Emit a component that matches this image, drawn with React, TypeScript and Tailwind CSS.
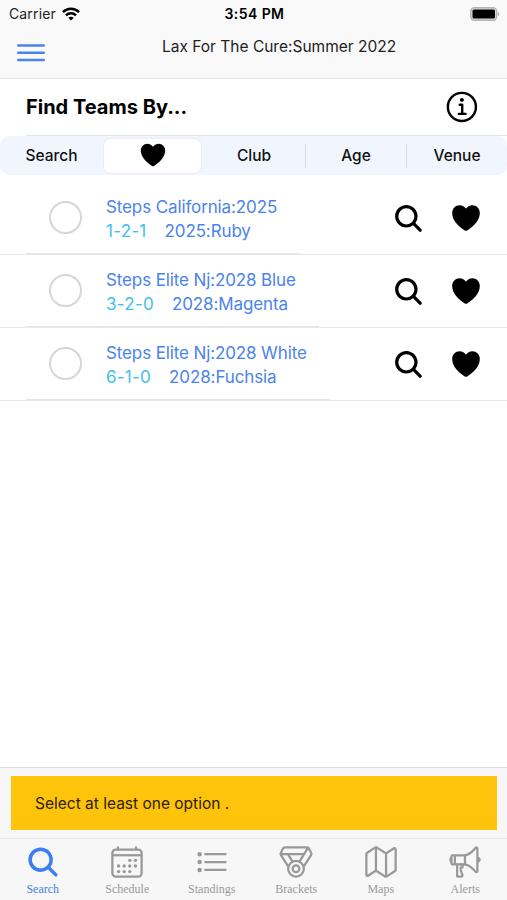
import { useState } from 'react';
import {
  IoCalendarOutline,
  IoHeart,
  IoInformationCircleOutline,
  IoListOutline,
  IoMapOutline,
  IoMedalOutline,
  IoMegaphoneOutline,
  IoSearch,
} from 'react-icons/io5';

const teams = [
  { name: 'Steps California:2025', record: '1-2-1', division: '2025:Ruby', line: 'w-[274px]' },
  { name: 'Steps Elite Nj:2028 Blue', record: '3-2-0', division: '2028:Magenta', line: 'w-[293px]' },
  { name: 'Steps Elite Nj:2028 White', record: '6-1-0', division: '2028:Fuchsia', line: 'w-[304px]' },
];

const tabs = [
  { label: 'Search', Icon: IoSearch },
  { label: 'Schedule', Icon: IoCalendarOutline },
  { label: 'Standings', Icon: IoListOutline },
  { label: 'Brackets', Icon: IoMedalOutline },
  { label: 'Maps', Icon: IoMapOutline },
  { label: 'Alerts', Icon: IoMegaphoneOutline },
];

const StatusBar = () => (
  <div className="grid h-7 grid-cols-3 items-center pl-[9px] pr-[7px] text-[14px] leading-none">
    <div className="flex items-center gap-[6px] text-[#222]">
      <span className="tracking-[0.01em]">Carrier</span>
      <svg className="mb-px h-[14px] w-[18px]" viewBox="0 0 18 14" fill="none" stroke="#000" strokeWidth="2.5">
        <path d="M1 5.1C5.5.6 12.5.6 17 5.1" />
        <path d="M4 8.3c2.8-2.8 7.2-2.8 10 0" />
        <path d="M9 13.5 6.3 10.8c1.5-1.5 3.9-1.5 5.4 0z" fill="#000" stroke="none" />
      </svg>
    </div>
    <span className="text-center text-[14px] font-semibold tracking-[0.03em]">3:54 PM</span>
    <svg className="mb-px ml-auto h-[14px] w-[30px]" viewBox="0 0 30 14">
      <rect x=".8" y=".8" width="25.8" height="12.4" rx="3.5" fill="#ddd" stroke="#b4b4b4" strokeWidth="1.4" />
      <rect x="2.5" y="2.5" width="22.5" height="9" rx="1.5" />
      <path d="M27.8 4.8c2 .8 2 3.6 0 4.4z" fill="#aaa" />
    </svg>
  </div>
);

const App = () => {
  const [tab, setTab] = useState('Search');

  return (
    <div className="flex h-[900px] w-[507px] flex-col overflow-hidden bg-white font-['Inter','Liberation_Sans',sans-serif] text-black">
      <header className="h-[79px] shrink-0 border-b border-[#e6e6e6] bg-[#f9f9f9]">
        <StatusBar />
        <div className="flex pl-[17px]">
          <button className="mt-4 h-[18px] w-7">
            <svg className="h-[18px] w-7" viewBox="0 0 28 18" stroke="#4b83ec" strokeWidth="2.4" strokeLinecap="round">
              <path d="M1.200 1.500h25.600M1.200 8.800h25.600M1.200 16h25.600" />
            </svg>
          </button>
          <h1 className="ml-[117px] mt-[9px] text-[15.5px] leading-5 text-[#222]">Lax For The Cure:Summer 2022</h1>
        </div>
      </header>

      <div className="flex h-14 shrink-0 items-center justify-between pl-[26px] pr-[25px]">
        <h2 className="text-[20px] font-bold">Find Teams By...</h2>
        <IoInformationCircleOutline className="size-[39px]" />
      </div>

      <div className="ml-[26px] h-px shrink-0 bg-[#e4e4e6]"></div>
      <div className="flex h-[39px] shrink-0 items-center rounded-[10px] bg-[#f1f6fe] text-[15.5px] font-medium text-[#111]">
        <span className="w-[103px] text-center">Search</span>
        <span className="flex h-9 w-[99px] items-center justify-center rounded-lg border border-[#eaedf3] bg-white text-black">
          <IoHeart className="mb-px size-[30px]" />
        </span>
        <span className="w-[103px] pl-px text-center">Club</span>
        <span className="h-6 w-px bg-[#d9dde5]"></span>
        <span className="w-[100px] text-center">Age</span>
        <span className="h-6 w-px bg-[#d9dde5]"></span>
        <span className="w-[100px] text-center">Venue</span>
      </div>

      <main className="flex-1 pt-[7px]">
        {teams.map((team) => (
          <div key={team.name} className="flex h-[73px] flex-col justify-between border-b border-[#e8e8e8]">
            <div className="flex pl-[49px] pt-[13px]">
              <span className="mt-[6px] size-[33px] rounded-full border-2 border-[#d6d6d6]"></span>
              <div className="ml-6 w-[285px] whitespace-nowrap text-[17px] leading-6 tracking-[-0.007em] text-[#4b83ec]">
                <p>{team.name}</p>
                <p className="flex gap-[18px]">
                  <span className="tracking-[0.015em] text-[#45bdf0]">{team.record}</span>
                  <span>{team.division}</span>
                </p>
              </div>
              <IoSearch className="ml-px mt-[7px] size-[33px]" />
              <IoHeart className="ml-6 mt-[6px] size-[34px]" />
            </div>
            <div className={`ml-[26px] h-px bg-[#e4e4e4] ${team.line}`}></div>
          </div>
        ))}
      </main>

      <div className="h-[71px] shrink-0 border-t border-[#dedede] bg-[#f7f7f7] px-[10.5px] pt-2">
        <div className="flex h-[54px] items-center bg-[#fec40b] pl-[24.5px] pt-px text-[15.5px] text-[#2c2100]">
          Select at least one option .
        </div>
      </div>

      <nav className="grid h-[62px] shrink-0 grid-cols-6 border-t border-[#e9e9e9] bg-[#f7f7f7]">
        {tabs.map(({ label, Icon }) => (
          <button
            key={label}
            onClick={() => setTab(label)}
            className={`flex flex-col items-center pl-px pt-[5px] ${tab === label ? 'text-[#3c7ff0]' : 'text-[#999]'}`}
          >
            <Icon className="size-9" />
            <span className="mt-[2px] font-['Liberation_Serif',serif] text-[12px] leading-[14px]">{label}</span>
          </button>
        ))}
      </nav>
    </div>
  );
};

export default App;
